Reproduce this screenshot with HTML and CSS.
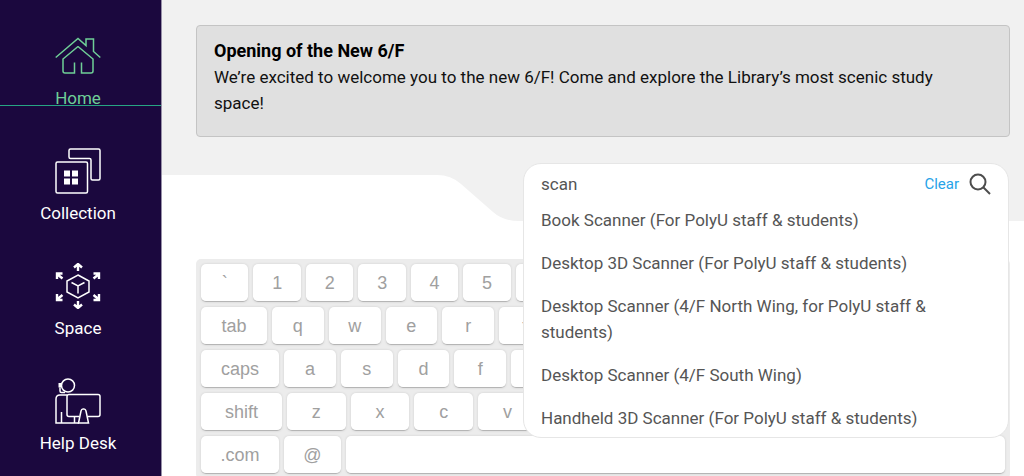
FILE: index.html
```
<!DOCTYPE html>
<html lang="en">

<head>
    <meta charset="UTF-8">
    <meta name="viewport" content="width=device-width, initial-scale=1.0">
    <title>Library Self-service</title>
    <link rel="stylesheet" href="styles.css">
</head>

<body>
    <nav id="sidebar">
        <a href="#home" class="active">
            <svg viewBox="0 0 46 46">
                <path d="M.7 24.5 23 5.5l8 7V6h7.500v12.500L45.300 24.500" />
                <path d="M23 13.500 8 26v12q0 2 2 2h9.500V29.500M26.500 29.500V40H36q2 0 2-2V26L23 13.500" />
            </svg>
            <span>Home</span>
        </a>
        <a href="#collection">
            <svg viewBox="0 0 46 46">
                <rect x="1" y="14" width="31.500" height="31" rx="1.500" />
                <path d="M14 9V2.500q0-1.500 1.500-1.500h28q1.500 0 1.500 1.500v28q0 1.500-1.500 1.500h-6q-1.500 0-1.500-1.500V12q0-1.500-1.500-1.500h-19Q14 10.500 14 9z" />
                <path class="solid" d="M9 22.500h6v6H9zM17 22.500h6v6h-6zM9 30.500h6v6H9zM17 30.500h6v6h-6z" />
            </svg>
            <span>Collection</span>
        </a>
        <a href="#space">
            <svg viewBox="0 0 46 46">
                <path d="M23 12 34 18v11L23 35 12 29V18z" />
                <path d="M16.500 19.500 23 23l6.500-3.500M23 23v7.500" />
                <path class="arrow" d="M23 8V2M19 4.500l4-3.500 4 3.500M23 38v6M19 41.500l4 3.500 4-3.500M7.500 15.500 2 11M2 16v-5.500h5.500M38.500 15.500 44 11M44 16v-5.500h-5.500M7.500 32 2 36.500M2 31v6h5.500M38.500 32l5.500 4.500M44 31v6h-5.500" />
            </svg>
            <span>Space</span>
        </a>
        <a href="#help">
            <svg viewBox="0 0 46 46">
                <circle cx="13" cy="7.500" r="6.500" />
                <path class="solid" d="M3.500 5h3v4.500h-3z" />
                <path d="M5 9.500V13q0 1.500 1.500 1.500H10" />
                <path d="M12 17H5q-4 0-4 4v24h23M6.500 34v11M19.500 39v6" />
                <path d="M24 38.500H14q-2 0-2-2v-18q0-2 2-2h29q2 0 2 2v18q0 2-2 2H32.500" />
                <path d="M23.500 45 26 33q.5-2 2-2h1q1.500 0 2 2l2.500 12z" />
            </svg>
            <span>Help Desk</span>
        </a>
    </nav>

    <main>
        <div id="top">
            <section id="notice">
                <h2>Opening of the New 6/F</h2>
                <p>We’re excited to welcome you to the new 6/F! Come and explore the Library’s most scenic study space!</p>
            </section>
        </div>
        <div id="wave">
            <div class="wave_low"></div>
            <svg viewBox="0 0 92 46">
                <path d="M0 0h8q14 0 24 9l32 28q10 9 26 9H0z" />
            </svg>
        </div>

        <form id="search">
            <div id="search_bar">
                <input type="text" value="scan" aria-label="Search">
                <button type="reset">Clear</button>
                <button type="button" aria-label="Submit search">
                    <svg viewBox="0 0 22 22">
                        <circle cx="9" cy="9" r="7.500" />
                        <path d="M14.500 14.500 21 21" />
                    </svg>
                </button>
            </div>
            <ul>
                <li><a href="#book">Book Scanner (For PolyU staff &amp; students)</a></li>
                <li><a href="#desktop3d">Desktop 3D Scanner (For PolyU staff &amp; students)</a></li>
                <li><a href="#north">Desktop Scanner (4/F North Wing, for PolyU staff &amp; students)</a></li>
                <li><a href="#south">Desktop Scanner (4/F South Wing)</a></li>
                <li><a href="#handheld">Handheld 3D Scanner (For PolyU staff &amp; students)</a></li>
            </ul>
        </form>

        <div id="keyboard">
            <div class="row">
                <button>`</button>
                <button>1</button>
                <button>2</button>
                <button>3</button>
                <button>4</button>
                <button>5</button>
                <button>6</button>
                <button>7</button>
                <button>8</button>
                <button>9</button>
                <button>0</button>
                <button>-</button>
                <button>=</button>
                <button class="backspace">backspace</button>
            </div>
            <div class="row">
                <button class="tab">tab</button>
                <button>q</button>
                <button>w</button>
                <button>e</button>
                <button>r</button>
                <button>t</button>
                <button>y</button>
                <button>u</button>
                <button>i</button>
                <button>o</button>
                <button>p</button>
                <button>[</button>
                <button>]</button>
                <button class="slash">\</button>
            </div>
            <div class="row">
                <button class="caps">caps</button>
                <button>a</button>
                <button>s</button>
                <button>d</button>
                <button>f</button>
                <button>g</button>
                <button>h</button>
                <button>j</button>
                <button>k</button>
                <button>l</button>
                <button>;</button>
                <button>'</button>
                <button class="enter">enter</button>
            </div>
            <div class="row">
                <button class="shift">shift</button>
                <button>z</button>
                <button>x</button>
                <button>c</button>
                <button>v</button>
                <button>b</button>
                <button>n</button>
                <button>m</button>
                <button>,</button>
                <button>.</button>
                <button>/</button>
                <button class="shift">shift</button>
            </div>
            <div class="row">
                <button class="caps">.com</button>
                <button class="at">@</button>
                <button aria-label="space"></button>
            </div>
        </div>
    </main>
</body>

</html>
```
FILE: styles.css
```
* {
    box-sizing: border-box;
}

body {
    display: flex;
    min-height: 100vh;
    margin: 0;
    overflow: hidden;
    background: white;
    font-family: Roboto, "Liberation Sans", sans-serif;
    font-size: 17px;
    line-height: 26px;
}

button {
    border: 0;
    padding: 0;
    background: none;
    font: inherit;
    cursor: pointer;
}

/* left menu */
#sidebar {
    display: flex;
    flex-direction: column;
    gap: 37px;
    flex: none;
    width: 162px;
    padding-top: 33px;
    background: #1b083e;
    border-right: 1px solid #9790a8;
}

#sidebar a {
    position: relative;
    display: flex;
    flex-direction: column;
    align-items: center;
    gap: 6px;
    padding-right: 5px;
    color: white;
    text-decoration: none;
}

#sidebar a.active {
    color: #6fcf97;
}

#sidebar a.active::after {
    content: "";
    position: absolute;
    left: 0;
    right: 0;
    top: 72px;
    border-top: 1px solid #27a583;
}

#sidebar svg {
    width: 46px;
    height: 46px;
    fill: none;
    stroke: currentColor;
    stroke-width: 1.5;
}

#sidebar svg .solid {
    fill: currentColor;
    stroke: none;
}

#sidebar svg .arrow {
    stroke-width: 2.4;
}

main {
    position: relative;
    flex: 1;
    min-width: 0;
}

#top {
    padding: 25px 14px 38px 34px;
    background: #f1f1f1;
}

#notice {
    min-height: 112px;
    padding: 12px 34px 18px 17px;
    border: 1px solid #c4c4c4;
    border-radius: 4px;
    background: #e0e0e0;
    color: #111;
}

#notice h2,
#notice p {
    margin: 0;
    font-size: 17px;
}

#notice h2 {
    color: black;
    font-size: 18px;
}

#wave {
    display: flex;
    height: 46px;
    background: #f1f1f1;
}

#wave .wave_low {
    width: 31%;
    background: white;
}

#wave svg {
    width: 92px;
    height: 46px;
    fill: white;
}

/* search box with suggestions */
#search {
    position: absolute;
    z-index: 1;
    top: 163px;
    right: 15px;
    width: 486px;
    max-width: 92%;
    padding: 5px 17px 6px;
    border: 1px solid #e6e6e6;
    border-radius: 18px;
    background: white;
}

#search_bar {
    display: flex;
    align-items: center;
    gap: 10px;
    height: 30px;
}

#search input {
    flex: 1;
    min-width: 0;
    padding: 0;
    border: 0;
    outline: 0;
    background: none;
    color: #555;
    font: inherit;
}

#search button {
    color: #27a3e8;
    font-size: 15px;
}

#search svg {
    display: block;
    width: 22px;
    height: 22px;
    fill: none;
    stroke: #4d4d4d;
    stroke-width: 2;
}

#search ul {
    display: flex;
    flex-direction: column;
    gap: 17px;
    margin: 0;
    padding: 8px 0 0;
    list-style: none;
}

#search li a {
    display: block;
    color: #555;
    text-decoration: none;
}

/* on-screen keyboard */
#keyboard {
    display: flex;
    flex-direction: column;
    gap: 5px;
    margin: 38px 14px 0 34px;
    padding: 5px;
    border-radius: 5px;
    background: #ececec;
}

.row {
    display: flex;
    gap: 5px;
}

.row button {
    flex: 1 1 0;
    min-width: 0;
    height: 38px;
    border-bottom: 1px solid #b5b5b5;
    border-radius: 5px;
    background: white;
    box-shadow: 0 0 3px -1px rgba(0, 0, 0, 0.3);
    color: #a0a0a0;
    font-family: "Liberation Sans", Arial, sans-serif;
    font-size: 18px;
}

.row .backspace {
    flex: 0 0 122px;
}

.row .tab {
    flex: 0 0 66px;
}

.row .slash {
    flex: 0 0 52px;
}

.row .caps {
    flex: 0 0 78px;
}

.row .enter {
    flex: 0 0 96px;
}

.row .shift {
    flex: 0 0 81px;
}

.row .at {
    flex: 0 0 57px;
}
```
